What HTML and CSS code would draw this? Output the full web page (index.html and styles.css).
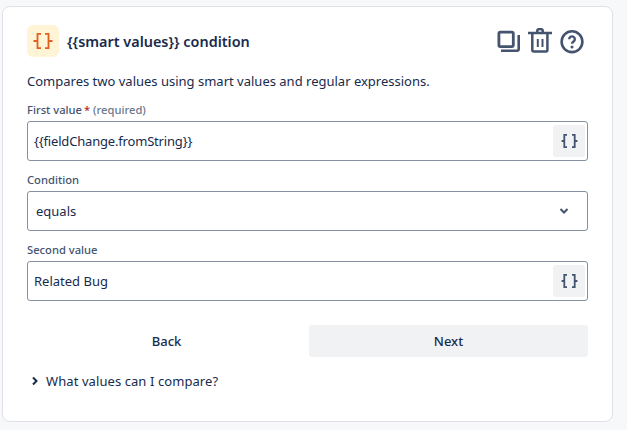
FILE: index.html
```html
<!DOCTYPE html>
<html lang="en">
<head>
<meta charset="utf-8">
<title>Smart values condition</title>
<link rel="stylesheet" href="styles.css">
</head>
<body>
<main class="card">
  <header class="head">
    <span class="tile">
      <svg class="tile-icon" viewBox="0 0 20 16" width="20" height="16"><path d="M8 .9H4.500V8H.5M4.500 8V15.100H8M12 .9h3.500V8h4M15.500 8v7.100H12" fill="none" stroke="#E2601F" stroke-width="1.800"/></svg>
    </span>
    <h1 class="title">{{smart values}} condition</h1>
    <div class="tools">
      <svg viewBox="0 -2 24 26" width="24" height="26"><rect x="2.900" y="2.100" width="14.400" height="14.500" rx="1.500" fill="none" stroke="#44546F" stroke-width="2.800"/><path d="M22.700 5V19a1.700 1.700 0 0 1-1.700 1.700H5" fill="none" stroke="#44546F" stroke-width="2.600"/></svg>
      <svg viewBox="0 -2 24 26" width="24" height="26"><path d="M0 3h24M4.300 3v17a1.500 1.500 0 0 0 1.500 1.500h12.100a1.500 1.500 0 0 0 1.500-1.500V3M9.200 3V1a2.800 2 0 0 1 5.600 0v2" fill="none" stroke="#44546F" stroke-width="2.500"/><path d="M9.800 9v8M14.500 9v8" fill="none" stroke="#44546F" stroke-width="2"/></svg>
      <svg viewBox="0 -2 24 26" width="24" height="26"><circle cx="12" cy="11.700" r="10.400" fill="none" stroke="#44546F" stroke-width="2.600"/><path d="M9.200 9.200a2.800 2.800 0 1 1 4.400 2.300c-1 .7-1.600 1.200-1.600 2.300" fill="none" stroke="#44546F" stroke-width="2.400"/><circle cx="12" cy="17" r="1.500" fill="#44546F"/></svg>
    </div>
  </header>
  <p class="desc">Compares two values using smart values and regular expressions.</p>

  <label class="label first">First value<span class="req">*</span> <span class="hint">(required)</span></label>
  <div class="field">
    <span class="value tight">{{fieldChange.fromString}}</span>
    <span class="brace">
      <svg viewBox="0 0 17 14" width="17" height="14"><path d="M6 .9H3.300V7H.6M3.300 7v6.100H6M11 .9h2.700V7h2.700M13.700 7v6.100H11" fill="none" stroke="#44546F" stroke-width="1.800"/></svg>
    </span>
  </div>

  <label class="label">Condition</label>
  <div class="field select">
    <span class="value">equals</span>
    <svg class="chev" viewBox="0 0 10 8" width="10" height="8"><path d="M1.500 2L5 5.500 8.500 2" fill="none" stroke="#44546F" stroke-width="2"/></svg>
  </div>

  <label class="label">Second value</label>
  <div class="field">
    <span class="value">Related Bug</span>
    <span class="brace">
      <svg viewBox="0 0 17 14" width="17" height="14"><path d="M6 .9H3.300V7H.6M3.300 7v6.100H6M11 .9h2.700V7h2.700M13.700 7v6.100H11" fill="none" stroke="#44546F" stroke-width="1.800"/></svg>
    </span>
  </div>

  <div class="actions">
    <button class="btn back" type="button">Back</button>
    <button class="btn next" type="button">Next</button>
  </div>

  <div class="more">
    <svg viewBox="0 0 8 10" width="8" height="10"><path d="M2 1.500L5.500 5 2 8.500" fill="none" stroke="#172B4D" stroke-width="2"/></svg>
    <span class="more-text">What values can I compare?</span>
  </div>
</main>
</body>
</html>
```
FILE: styles.css
```css
* { box-sizing: border-box; }
html, body { margin: 0; height: 100%; }
body {
  background: #F7F8F9;
  padding: 6px 14px 8px 2px;
  font-family: "Noto Sans", "Open Sans", sans-serif;
  color: #172B4D;
  overflow: hidden;
}
.card {
  width: 611px;
  height: 416px;
  background: #fff;
  border: 1px solid #DFE1E6;
  border-radius: 8px;
  padding: 18px 24px 0 24px;
}
.head { display: flex; align-items: center; height: 32px; }
.tile {
  width: 32px; height: 32px; border-radius: 6px; background: #FFF4D6;
  display: flex; align-items: center; justify-content: center; flex: none;
}
.title { margin: 0 0 0 8px; font-size: 14.400px; font-weight: 600; color: #172B4D; }
.tools { margin-left: auto; display: flex; gap: 8px; padding-right: 4px; }
.desc { margin: 14px 0 0; font-size: 13px; line-height: 20px; color: #172B4D; }
.label {
  display: block; margin-top: 9px; height: 20px; line-height: 20px;
  font-size: 11.200px; font-weight: 500; color: #44546F;
}
.req { color: #AE2E24; margin-left: 2px; }
.hint { color: #6B778C; }
.field {
  margin-top: 1px; height: 40px; width: 561px;
  border: 1px solid #8590A2; border-radius: 3px;
  display: flex; align-items: center; padding: 0 2px 0 6px;
  font-size: 13px; background: #fff;
}
.field + .label { margin-top: 9px; }
.value { flex: 1; }
.tight { letter-spacing: -.18px; }
.brace {
  width: 32px; height: 32px; border-radius: 3px; background: #F1F2F4;
  display: flex; align-items: center; justify-content: center;
}
.select { padding: 0 18px 0 8px; }
.actions { display: flex; gap: 3px; width: 561px; margin-top: 24px; }
.btn {
  flex: 1; height: 32px; border: 0; border-radius: 3px; background: transparent;
  font: 500 13px "Noto Sans", "Open Sans", sans-serif; color: #172B4D;
}
.next { background: #F1F2F4; }
.more { display: flex; align-items: center; margin-top: 14px; height: 20px; padding-left: 4px; gap: 7px; font-size: 13px; }
.more-text { letter-spacing: .08px; }
```
